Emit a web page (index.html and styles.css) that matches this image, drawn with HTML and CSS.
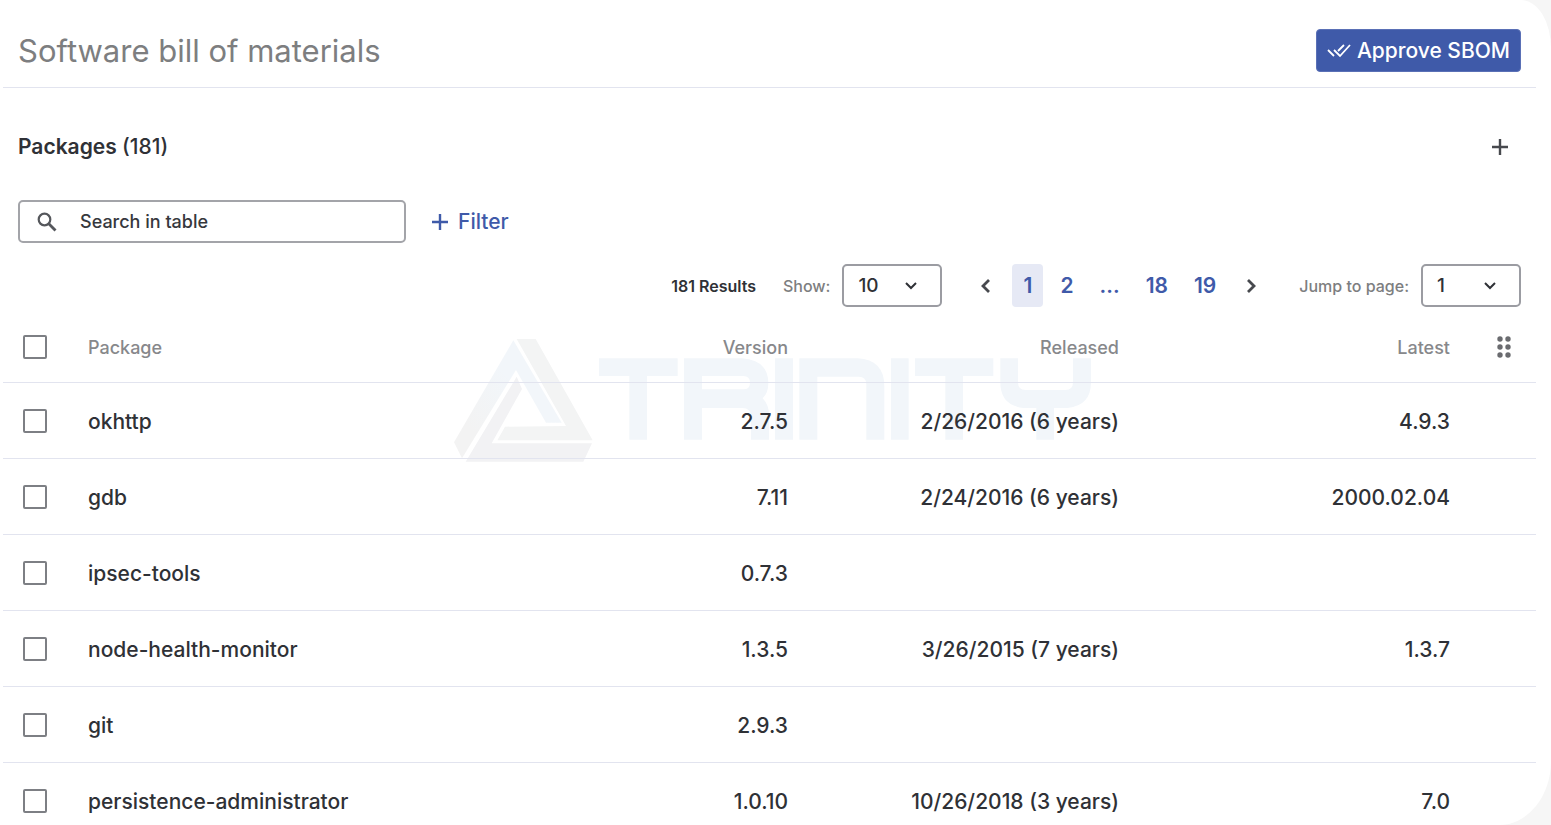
FILE: index.html
```html
<!DOCTYPE html>
<html lang="en">
<head>
<meta charset="utf-8">
<meta name="viewport" content="width=device-width, initial-scale=1">
<title>Software bill of materials</title>
<link rel="stylesheet" href="styles.css">
</head>
<body>
<main class="card">
  <header class="card-header">
    <h1 class="title">Software bill of materials</h1>
    <button class="approve" type="button">
      <svg width="24" height="14" viewBox="0 0 24 14" fill="none" stroke="currentColor" stroke-width="1.8" aria-hidden="true"><path d="M1 6l6 6M7 6l6 6L23 1M11 7l6-6"/></svg>
      Approve SBOM
    </button>
  </header>

  <section class="section-head">
    <h2 class="subtitle">Packages <span class="count">(181)</span></h2>
    <button class="icon-button" type="button" aria-label="Expand packages">
      <svg width="16" height="16" viewBox="0 0 16 16" stroke="currentColor" stroke-width="2.4" aria-hidden="true"><path d="M8 0v16M0 8h16"/></svg>
    </button>
  </section>

  <div class="tools">
    <label class="search">
      <svg width="20" height="20" viewBox="0 0 20 20" fill="none" stroke="currentColor" aria-hidden="true"><circle cx="7.5" cy="7.5" r="5.8" stroke-width="2.2"/><path d="M11.8 11.8l6.7 6.7" stroke-width="2.8"/></svg>
      <input class="search-input" type="text" placeholder="Search in table" aria-label="Search in table">
    </label>
    <button class="filter" type="button">
      <svg width="16" height="16" viewBox="0 0 16 16" stroke="currentColor" stroke-width="2.4" aria-hidden="true"><path d="M8 0v16M0 8h16"/></svg>
      Filter
    </button>
  </div>

  <div class="paging">
    <span class="results">181 Results</span>
    <div class="field">
      <label class="field-label" for="show">Show:</label>
      <span class="select-wrap">
        <select class="select" id="show"><option>10</option><option>25</option><option>50</option></select>
        <svg class="caret" width="12" height="8" viewBox="0 0 12 8" fill="none" stroke="currentColor" stroke-width="2" aria-hidden="true"><path d="M1 1l5 5 5-5"/></svg>
      </span>
    </div>
    <nav class="pages" aria-label="Pages">
      <button class="arrow" type="button" aria-label="Previous page"><svg width="10" height="14" viewBox="0 0 10 14" fill="none" stroke="currentColor" stroke-width="2.8" aria-hidden="true"><path d="M8 1L2 7l6 6"/></svg></button>
      <a class="page current" href="#1" aria-current="page">1</a>
      <a class="page" href="#2">2</a>
      <a class="page" href="#more">...</a>
      <a class="page" href="#18">18</a>
      <a class="page" href="#19">19</a>
      <button class="arrow" type="button" aria-label="Next page"><svg width="10" height="14" viewBox="0 0 10 14" fill="none" stroke="currentColor" stroke-width="2.8" aria-hidden="true"><path d="M2 1l6 6-6 6"/></svg></button>
    </nav>
    <div class="field">
      <label class="field-label" for="jump">Jump to page:</label>
      <span class="select-wrap">
        <select class="select" id="jump"><option>1</option><option>2</option><option>18</option><option>19</option></select>
        <svg class="caret" width="12" height="8" viewBox="0 0 12 8" fill="none" stroke="currentColor" stroke-width="2" aria-hidden="true"><path d="M1 1l5 5 5-5"/></svg>
      </span>
    </div>
  </div>

  <div class="table-area">
    <svg class="watermark" viewBox="42 42 1911 370" role="img" aria-label="Trinity">
      <defs>
        <linearGradient id="blade" x1="0" y1="1" x2="1" y2="0"><stop offset="0.2" stop-color="#f3f3f3"/><stop offset="0.6" stop-color="#f2f6fa"/></linearGradient>
      </defs>
      <path fill="url(#blade)" d="M220 46L365 293H318L228 135L66 400L42 352Z"/>
      <path fill="#f3f4f4" d="M230 42H287L458 346H172L195 305L378 303Z"/>
      <path fill="#f2f2f4" d="M230 155L246 192L155 355H456L430 410H77Z"/>
      <g fill="#f2f6fa">
        <path d="M477 100H713V153H621V344H568V153H477Z"/>
        <path fill-rule="evenodd" d="M732 100H905Q985 105 985 174Q985 204 968 220Q987 240 987 270V344H933V275Q933 249 907 249H786V344H732ZM786 153V193H910Q930 193 930 173Q930 153 910 153Z"/>
        <path d="M1005 100H1059V344H1005Z"/>
        <path d="M1078 100H1253Q1333 105 1333 184V344H1279V178Q1279 155 1256 155H1132V344H1078Z"/>
        <path d="M1353 100H1406V344H1353Z"/>
        <path d="M1425 100H1660V153H1569V344H1516V153H1425Z"/>
        <path d="M1681 100H1734V172Q1734 195 1757 195H1876Q1899 195 1899 172V100H1953V172Q1953 242 1883 249H1842V344H1789V249H1751Q1681 242 1681 172Z"/>
      </g>
    </svg>
    <table class="table">
      <colgroup><col class="col-check"><col><col class="col-value"><col class="col-value"><col class="col-value"><col class="col-menu"></colgroup>
      <thead>
        <tr>
          <th class="check-cell"><input class="check" type="checkbox" aria-label="Select all packages"></th>
          <th>Package</th><th class="num">Version</th><th class="num">Released</th><th class="num">Latest</th>
          <th class="menu-cell"><button class="menu-button" type="button" aria-label="Choose columns"><svg width="14" height="22" viewBox="0 0 14 22" fill="currentColor" aria-hidden="true"><circle cx="3" cy="3" r="2.7"/><circle cx="11" cy="3" r="2.7"/><circle cx="3" cy="11" r="2.7"/><circle cx="11" cy="11" r="2.7"/><circle cx="3" cy="19" r="2.7"/><circle cx="11" cy="19" r="2.7"/></svg></button></th>
        </tr>
      </thead>
      <tbody>
        <tr><td class="check-cell"><input class="check" type="checkbox" aria-label="Select okhttp"></td><td>okhttp</td><td class="num">2.7.5</td><td class="num">2/26/2016 (6 years)</td><td class="num">4.9.3</td><td></td></tr>
        <tr><td class="check-cell"><input class="check" type="checkbox" aria-label="Select gdb"></td><td>gdb</td><td class="num">7.11</td><td class="num">2/24/2016 (6 years)</td><td class="num">2000.02.04</td><td></td></tr>
        <tr><td class="check-cell"><input class="check" type="checkbox" aria-label="Select ipsec-tools"></td><td>ipsec-tools</td><td class="num">0.7.3</td><td></td><td></td><td></td></tr>
        <tr><td class="check-cell"><input class="check" type="checkbox" aria-label="Select node-health-monitor"></td><td>node-health-monitor</td><td class="num">1.3.5</td><td class="num">3/26/2015 (7 years)</td><td class="num">1.3.7</td><td></td></tr>
        <tr><td class="check-cell"><input class="check" type="checkbox" aria-label="Select git"></td><td>git</td><td class="num">2.9.3</td><td></td><td></td><td></td></tr>
        <tr><td class="check-cell"><input class="check" type="checkbox" aria-label="Select persistence-administrator"></td><td>persistence-administrator</td><td class="num">1.0.10</td><td class="num">10/26/2018 (3 years)</td><td class="num">7.0</td><td></td></tr>
      </tbody>
    </table>
  </div>
</main>
</body>
</html>
```
FILE: styles.css
```css
* { box-sizing: border-box; }

body {
  margin: 0;
  background: #f6f6f6;
  color: #2f3136;
  font-family: Inter, "Liberation Sans", sans-serif;
  font-size: 21px;
}

button, input, select { font: inherit; color: inherit; }

button {
  display: inline-flex;
  align-items: center;
  justify-content: center;
  padding: 0;
  border: 0;
  background: none;
  cursor: pointer;
}

.card {
  height: 100vh;
  overflow: hidden;
  padding: 0 15px 0 3px;
  background: #fff;
  border-radius: 0 30px 52px 0 / 0 48px 64px 0;
}

.card-header {
  display: flex;
  align-items: center;
  justify-content: space-between;
  padding: 29px 15px 15px;
  border-bottom: 1px solid #e2e4ef;
}

.title {
  margin: 0;
  color: #7d7e80;
  font-size: 31px;
  font-weight: 400;
  line-height: 42px;
}

.approve {
  height: 43px;
  gap: 6px;
  padding: 0 10px;
  border: 1px solid #5a70b6;
  border-radius: 4px;
  background: #3f5aa9;
  color: #fff;
  font-weight: 500;
}

.section-head {
  display: flex;
  align-items: center;
  justify-content: space-between;
  padding: 45px 28px 39px 15px;
}

.subtitle {
  margin: 0;
  font-size: 21px;
  font-weight: 600;
  line-height: 28px;
}

.count { font-weight: 500; }

.icon-button { color: #47494e; }

.tools {
  display: flex;
  align-items: center;
  gap: 26px;
  padding: 0 15px 21px;
}

.search {
  display: flex;
  align-items: center;
  gap: 23px;
  width: 388px;
  height: 43px;
  padding: 0 17px;
  border: 2px solid #a3a4a9;
  border-radius: 5px;
  color: #55575c;
}

.search-input {
  flex: 1;
  min-width: 0;
  padding: 0;
  border: 0;
  outline: 0;
  background: none;
  font-size: 18px;
  font-weight: 500;
}

.search-input::placeholder { color: #36383d; opacity: 1; }

.filter {
  gap: 10px;
  color: #3f5aa9;
  font-weight: 500;
}

.paging {
  display: flex;
  align-items: center;
  justify-content: flex-end;
  padding: 0 15px 5px;
}

.results {
  margin-right: 27px;
  font-size: 16px;
  font-weight: 600;
}

.field {
  display: flex;
  align-items: center;
  gap: 12px;
}

.field-label {
  color: #7d7e80;
  font-size: 16px;
  font-weight: 500;
}

.select-wrap { position: relative; }

.select {
  display: block;
  width: 100px;
  height: 43px;
  padding: 0 14px;
  border: 2px solid #9b9ca2;
  border-radius: 5px;
  appearance: none;
  background: #fff;
  font-size: 19px;
  font-weight: 500;
}

.caret {
  position: absolute;
  top: 18px;
  right: 25px;
  pointer-events: none;
}

.pages {
  display: flex;
  align-items: center;
  gap: 8px;
  margin: 0 30px 0 26px;
}

.arrow { width: 36px; height: 43px; color: #47494e; }

.page {
  min-width: 31px;
  padding: 0 9px;
  border-radius: 4px;
  color: #3f5aa9;
  font-weight: 600;
  line-height: 43px;
  text-align: center;
  text-decoration: none;
}

.current { background: #e6e9f5; }

.table-area { position: relative; }

.watermark {
  position: absolute;
  top: 27px;
  left: 50%;
  width: 637px;
  margin-left: -316px;
}

.table {
  position: relative;
  width: 100%;
  border-collapse: separate;
  border-spacing: 0;
  table-layout: fixed;
}

.col-check { width: 85px; }
.col-value { width: 331px; }
.col-menu { width: 86px; }

.table th, .table td {
  height: 76px;
  padding: 2px 0 0;
  border-bottom: 1px solid #e2e4ef;
  font-weight: 500;
  text-align: left;
}

.table th {
  height: 71px;
  padding: 0;
  color: #87888b;
  font-size: 18px;
}

.table .num { text-align: right; }
.table .menu-cell { padding-left: 47px; }
.table .check-cell { padding: 0 0 0 20px; }

.menu-button { display: flex; color: #6a6b6f; }

.check {
  display: block;
  width: 24px;
  height: 24px;
  margin: 0;
  border: 2px solid #7d7f84;
  border-radius: 2px;
  appearance: none;
}
```
